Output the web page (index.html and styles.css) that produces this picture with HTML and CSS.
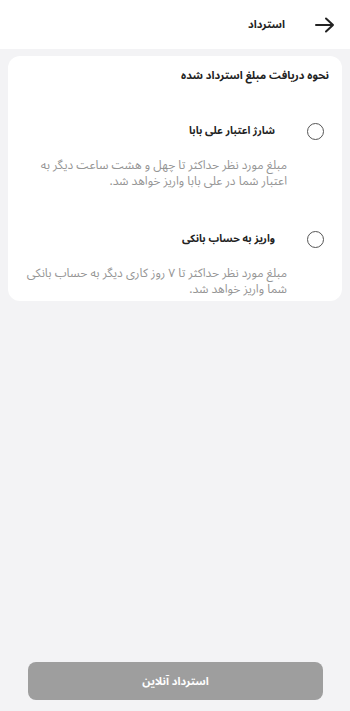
FILE: index.html
```html
<!DOCTYPE html>
<html lang="fa" dir="rtl">
<head>
<meta charset="utf-8">
<link rel="stylesheet" href="styles.css">
</head>
<body>
<div class="page">
  <header class="header">
    <svg class="back" width="20" height="16" viewBox="0 0 20 16" aria-hidden="true">
      <path d="M1 8 H18 M11 1.5 L18 8 L11 14.5" fill="none" stroke="#222" stroke-width="2" stroke-linecap="round" stroke-linejoin="round"/>
    </svg>
    <h1 class="title">استرداد</h1>
  </header>
  <main class="content">
    <section class="card">
      <h2 class="card-title">نحوه دریافت مبلغ استرداد شده</h2>
      <div class="option">
        <div class="option-row">
          <span class="radio"></span>
          <span class="option-label">شارژ اعتبار علی بابا</span>
        </div>
        <p class="option-desc">مبلغ مورد نظر حداکثر تا چهل و هشت ساعت دیگر به اعتبار شما در علی بابا واریز خواهد شد.</p>
      </div>
      <div class="option">
        <div class="option-row">
          <span class="radio"></span>
          <span class="option-label">واریز به حساب بانکی</span>
        </div>
        <p class="option-desc">مبلغ مورد نظر حداکثر تا ۷ روز کاری دیگر به حساب بانکی شما واریز خواهد شد.</p>
      </div>
    </section>
  </main>
  <footer class="footer">
    <button class="submit" type="button">استرداد آنلاین</button>
  </footer>
</div>
</body>
</html>
```
FILE: styles.css
```css
* { box-sizing: border-box; }
html, body {
  margin: 0;
  padding: 0;
  height: 100%;
}
body {
  background: #f3f3f5;
  font-family: "Noto Sans Arabic", "Vazirmatn", "DejaVu Sans", sans-serif;
  color: #222;
}
.page {
  height: 711px;
  display: flex;
  flex-direction: column;
}
.header {
  height: 49px;
  background: #fff;
  display: flex;
  align-items: center;
  padding: 0 15px 0 0;
  gap: 30px;
}
.back { display: block; }
.title {
  margin: 0;
  font-size: 11px;
  line-height: 18px;
  font-weight: 700;
  color: #222;
}
.content {
  flex: 1;
  padding: 7px 8px 0;
}
.card {
  background: #fff;
  border-radius: 12px;
  padding: 11px 13px 3px 13px;
}
.card-title {
  margin: 0;
  font-size: 11px;
  font-weight: 700;
  line-height: 18px;
  color: #222;
}
.option { padding-top: 37px; }
.option + .option { padding-top: 40px; }
.option-row {
  display: flex;
  align-items: center;
  height: 18px;
  gap: 32px;
  padding-right: 5px;
}
.radio {
  width: 17px;
  height: 17px;
  border: 1.5px solid #555;
  border-radius: 50%;
  flex: none;
}
.option-label {
  font-size: 10.5px;
  line-height: 18px;
  font-weight: 700;
  color: #222;
}
.option-desc {
  margin: 18px 42px 0 0;
  font-size: 12px;
  line-height: 16px;
  color: #959595;
}
.footer {
  padding: 0 27px 11px 28px;
}
.submit {
  width: 100%;
  height: 38px;
  border: none;
  border-radius: 8px;
  background: #9e9e9e;
  color: #fff;
  font-family: inherit;
  font-size: 11px;
  font-weight: 700;
}
```
